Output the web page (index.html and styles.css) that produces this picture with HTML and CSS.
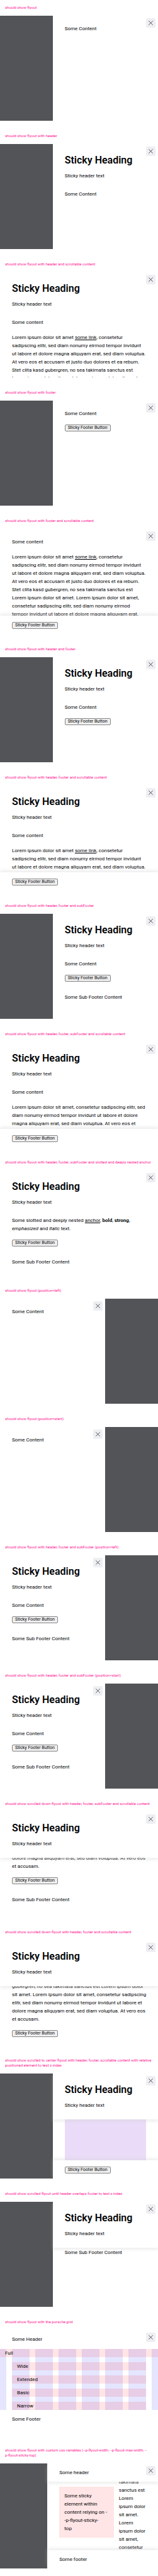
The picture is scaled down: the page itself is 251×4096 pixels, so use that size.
FILE: index.html
```html
<!DOCTYPE html>
<html lang="en">
<head>
<meta charset="utf-8">
<title>Flyout</title>
<link rel="stylesheet" href="styles.css">
</head>
<body>
<svg class="sprite" aria-hidden="true"><symbol id="close" viewBox="0 0 14 14"><path d="M.6.6 13.4 13.4M13.4.6.6 13.4" fill="none" stroke="currentColor" stroke-width="1.3"/></symbol></svg>

<section class="case">
<p class="label">should show flyout</p>
<div class="frame"><div class="backdrop"></div><div class="flyout">
<button class="close" aria-label="Close"><svg><use href="#close"/></svg></button>
<div class="scroll no-header"><div class="content"><p>Some Content</p></div></div>
</div></div>
</section>

<section class="case">
<p class="label">should show flyout with header</p>
<div class="frame"><div class="backdrop"></div><div class="flyout">
<button class="close" aria-label="Close"><svg><use href="#close"/></svg></button>
<header class="header"><h2>Sticky Heading</h2><p>Sticky header text</p></header>
<div class="scroll"><div class="content"><p>Some Content</p></div></div>
</div></div>
</section>

<section class="case">
<p class="label">should show flyout with header and scrollable content</p>
<div class="frame"><div class="flyout">
<button class="close" aria-label="Close"><svg><use href="#close"/></svg></button>
<header class="header"><h2>Sticky Heading</h2><p>Sticky header text</p></header>
<div class="scroll"><div class="content"><p>Some content</p><p class="lines">Lorem ipsum dolor sit amet <a href="#">some link</a>, consetetur<br>sadipscing elitr, sed diam nonumy eirmod tempor invidunt<br>ut labore et dolore magna aliquyam erat, sed diam voluptua.<br>At vero eos et accusam et justo duo dolores et ea rebum.<br>Stet clita kasd gubergren, no sea takimata sanctus est<br>Lorem ipsum dolor sit amet. Lorem ipsum dolor sit amet,</p></div></div>
</div></div>
</section>

<section class="case">
<p class="label">should show flyout with footer</p>
<div class="frame"><div class="backdrop"></div><div class="flyout">
<button class="close" aria-label="Close"><svg><use href="#close"/></svg></button>
<div class="scroll no-header"><div class="content"><p>Some Content</p></div>
<footer class="footer"><button class="btn">Sticky Footer Button</button></footer></div>
</div></div>
</section>

<section class="case">
<p class="label">should show flyout with footer and scrollable content</p>
<div class="frame"><div class="flyout">
<button class="close" aria-label="Close"><svg><use href="#close"/></svg></button>
<div class="scroll no-header"><div class="content"><p>Some content</p><p class="lines">Lorem ipsum dolor sit amet <a href="#">some link</a>, consetetur<br>sadipscing elitr, sed diam nonumy eirmod tempor invidunt<br>ut labore et dolore magna aliquyam erat, sed diam voluptua.<br>At vero eos et accusam et justo duo dolores et ea rebum.<br>Stet clita kasd gubergren, no sea takimata sanctus est<br>Lorem ipsum dolor sit amet. Lorem ipsum dolor sit amet,<br>consetetur sadipscing elitr, sed diam nonumy eirmod<br>tempor invidunt ut labore et dolore magna aliquyam erat,</p></div></div>
<footer class="footer stuck"><button class="btn">Sticky Footer Button</button></footer>
</div></div>
</section>

<section class="case">
<p class="label">should show flyout with header and footer</p>
<div class="frame"><div class="backdrop"></div><div class="flyout">
<button class="close" aria-label="Close"><svg><use href="#close"/></svg></button>
<header class="header"><h2>Sticky Heading</h2><p>Sticky header text</p></header>
<div class="scroll"><div class="content"><p>Some Content</p></div>
<footer class="footer"><button class="btn">Sticky Footer Button</button></footer></div>
</div></div>
</section>

<section class="case">
<p class="label">should show flyout with header, footer and scrollable content</p>
<div class="frame"><div class="flyout">
<button class="close" aria-label="Close"><svg><use href="#close"/></svg></button>
<header class="header"><h2>Sticky Heading</h2><p>Sticky header text</p></header>
<div class="scroll"><div class="content"><p>Some content</p><p class="lines">Lorem ipsum dolor sit amet <a href="#">some link</a>, consetetur<br>sadipscing elitr, sed diam nonumy eirmod tempor invidunt<br>ut labore et dolore magna aliquyam erat, sed diam voluptua.</p></div></div>
<footer class="footer stuck"><button class="btn">Sticky Footer Button</button></footer>
</div></div>
</section>

<section class="case">
<p class="label">should show flyout with header, footer and subFooter</p>
<div class="frame"><div class="backdrop"></div><div class="flyout">
<button class="close" aria-label="Close"><svg><use href="#close"/></svg></button>
<header class="header"><h2>Sticky Heading</h2><p>Sticky header text</p></header>
<div class="scroll"><div class="content"><p>Some Content</p></div>
<footer class="footer"><button class="btn">Sticky Footer Button</button></footer>
<div class="sub-footer"><p>Some Sub Footer Content</p></div></div>
</div></div>
</section>

<section class="case">
<p class="label">should show flyout with header, footer, subFooter and scrollable content</p>
<div class="frame"><div class="flyout">
<button class="close" aria-label="Close"><svg><use href="#close"/></svg></button>
<header class="header"><h2>Sticky Heading</h2><p>Sticky header text</p></header>
<div class="scroll"><div class="content"><p>Some content</p><p class="lines">Lorem ipsum dolor sit amet, consetetur sadipscing elitr, sed<br>diam nonumy eirmod tempor invidunt ut labore et dolore<br>magna aliquyam erat, sed diam voluptua. At vero eos et</p></div></div>
<footer class="footer stuck"><button class="btn">Sticky Footer Button</button></footer>
</div></div>
</section>

<section class="case">
<p class="label">should show flyout with header, footer, subFooter and slotted and deeply nested anchor</p>
<div class="frame"><div class="flyout">
<button class="close" aria-label="Close"><svg><use href="#close"/></svg></button>
<header class="header"><h2>Sticky Heading</h2><p>Sticky header text</p></header>
<div class="scroll"><div class="content"><p class="lines">Some slotted and deeply nested <a href="#">anchor</a>, <b>bold</b>, <strong>strong</strong>,<br><em>emphasized</em> and <i>italic</i> text.</p></div>
<footer class="footer"><button class="btn">Sticky Footer Button</button></footer>
<div class="sub-footer"><p>Some Sub Footer Content</p></div></div>
</div></div>
</section>

<section class="case">
<p class="label">should show flyout (position=left)</p>
<div class="frame"><div class="flyout">
<button class="close" aria-label="Close"><svg><use href="#close"/></svg></button>
<div class="scroll no-header"><div class="content"><p>Some Content</p></div></div>
</div><div class="backdrop"></div></div>
</section>

<section class="case">
<p class="label">should show flyout (position=start)</p>
<div class="frame"><div class="flyout">
<button class="close" aria-label="Close"><svg><use href="#close"/></svg></button>
<div class="scroll no-header"><div class="content"><p>Some Content</p></div></div>
</div><div class="backdrop"></div></div>
</section>

<section class="case">
<p class="label">should show flyout with header, footer and subFooter (position=left)</p>
<div class="frame"><div class="flyout">
<button class="close" aria-label="Close"><svg><use href="#close"/></svg></button>
<header class="header"><h2>Sticky Heading</h2><p>Sticky header text</p></header>
<div class="scroll"><div class="content"><p>Some Content</p></div>
<footer class="footer"><button class="btn">Sticky Footer Button</button></footer>
<div class="sub-footer"><p>Some Sub Footer Content</p></div></div>
</div><div class="backdrop"></div></div>
</section>

<section class="case">
<p class="label">should show flyout with header, footer and subFooter (position=start)</p>
<div class="frame"><div class="flyout">
<button class="close" aria-label="Close"><svg><use href="#close"/></svg></button>
<header class="header"><h2>Sticky Heading</h2><p>Sticky header text</p></header>
<div class="scroll"><div class="content"><p>Some Content</p></div>
<footer class="footer"><button class="btn">Sticky Footer Button</button></footer>
<div class="sub-footer"><p>Some Sub Footer Content</p></div></div>
</div><div class="backdrop"></div></div>
</section>

<section class="case">
<p class="label">should show scrolled down flyout with header, footer, subFooter and scrollable content</p>
<div class="frame"><div class="flyout">
<button class="close" aria-label="Close"><svg><use href="#close"/></svg></button>
<header class="header stuck"><h2>Sticky Heading</h2><p>Sticky header text</p></header>
<div class="scroll scrolled-down"><div class="content"><p class="lines">dolore magna aliquyam erat, sed diam voluptua. At vero eos<br>et accusam.</p></div>
<footer class="footer"><button class="btn">Sticky Footer Button</button></footer>
<div class="sub-footer"><p>Some Sub Footer Content</p></div></div>
</div></div>
</section>

<section class="case">
<p class="label">should show scrolled down flyout with header, footer and scrollable content</p>
<div class="frame"><div class="flyout">
<button class="close" aria-label="Close"><svg><use href="#close"/></svg></button>
<header class="header stuck"><h2>Sticky Heading</h2><p>Sticky header text</p></header>
<div class="scroll scrolled-down"><div class="content"><p class="lines">gubergren, no sea takimata sanctus est Lorem ipsum dolor<br>sit amet. Lorem ipsum dolor sit amet, consetetur sadipscing<br>elitr, sed diam nonumy eirmod tempor invidunt ut labore et<br>dolore magna aliquyam erat, sed diam voluptua. At vero eos<br>et accusam.</p></div>
<footer class="footer"><button class="btn">Sticky Footer Button</button></footer></div>
</div></div>
</section>

<section class="case">
<p class="label">should show scrolled to center flyout with header, footer, scrollable content with relative<br>positioned element to test z-index</p>
<div class="frame"><div class="backdrop"></div><div class="flyout">
<button class="close" aria-label="Close"><svg><use href="#close"/></svg></button>
<header class="header stuck"><h2>Sticky Heading</h2><p>Sticky header text</p></header>
<div class="scroll"><div class="block"></div></div>
<footer class="footer stuck"><button class="btn">Sticky Footer Button</button></footer>
</div></div>
</section>

<section class="case">
<p class="label">should show scrolled flyout until header overlaps footer to test z-index</p>
<div class="frame"><div class="backdrop"></div><div class="flyout">
<button class="close" aria-label="Close"><svg><use href="#close"/></svg></button>
<header class="header stuck"><h2>Sticky Heading</h2><p>Sticky header text</p></header>
<div class="scroll"><div class="sub-footer tight"><p>Some Sub Footer Content</p></div></div>
</div></div>
</section>

<section class="case">
<p class="label">should show flyout with the porsche grid</p>
<div class="frame"><div class="flyout">
<button class="close" aria-label="Close"><svg><use href="#close"/></svg></button>
<header class="header compact"><p>Some Header</p></header>
<div class="scroll">
<div class="grid">
<i class="col col-1"></i><i class="col col-2"></i><i class="col col-3"></i><i class="col col-4"></i><i class="col col-5"></i><i class="col col-6"></i><i class="col col-7"></i><i class="col col-8"></i>
<p class="row row-1 full">Full</p><p class="row row-2">Wide</p><p class="row row-3">Extended</p><p class="row row-4">Basic</p><p class="row row-5">Narrow</p>
</div>
<footer class="footer compact"><p>Some Footer</p></footer></div>
</div></div>
</section>

<section class="case">
<p class="label">should show flyout with custom css variables (--p-flyout-width, --p-flyout-max-width, --<br>p-flyout-sticky-top)</p>
<div class="frame"><div class="backdrop narrow"></div><div class="flyout">
<button class="close" aria-label="Close"><svg><use href="#close"/></svg></button>
<header class="header compact stuck"><p>Some header</p></header>
<div class="scroll"><div class="content split"><div class="sticky-box"><p class="lines">Some sticky<br>element within<br>content relying on -<br>-p-flyout-sticky-<br>top</p></div><p class="side">takimata sanctus est Lorem ipsum dolor sit amet. Lorem ipsum dolor sit amet, consetetur</p></div></div>
<footer class="footer compact stuck"><p>Some footer</p></footer>
</div></div>
</section>
</body>
</html>
```
FILE: styles.css
```css
* { box-sizing: border-box; }
body { margin: 0; background: #fff; color: #010205; font: 8px/13px Roboto, "Liberation Sans", sans-serif; }
p, h2 { margin: 0; }
a { color: inherit; text-decoration: underline; }
.sprite { display: none; }
.lines { white-space: nowrap; }

.case { padding-bottom: 12px; }
.label { padding: 8px 4px 9px 8px; font-size: 6px; line-height: 8px; color: #ff1493; }
.frame { display: flex; height: 167px; overflow: hidden; }
.backdrop { flex: none; width: 33.333%; background: #535457; }
.backdrop.narrow { width: 30%; }

.flyout { position: relative; flex: 1; min-width: 0; display: flex; flex-direction: column; background: #fff; }
.close { position: absolute; z-index: 3; top: 4px; right: 4px; display: flex; align-items: center; justify-content: center; width: 15px; height: 15px; padding: 0; border: 0; border-radius: 2px; background: #eeeff2; color: #010205; }
.close svg { width: 7px; height: 7px; }

.header { position: relative; z-index: 2; flex: none; padding: 15px 19px 16px; background: #fff; }
.header h2 { margin-bottom: 7px; font-size: 16px; line-height: 22px; font-weight: 600; white-space: nowrap; }
.header.compact { padding: 8px 19px; }
.header.stuck { box-shadow: 0 3px 5px rgba(204, 204, 204, .35); }

.scroll { flex: 1; min-height: 0; display: flex; flex-direction: column; overflow: hidden; }
.no-header { padding-top: 14px; }
.scrolled-down { justify-content: flex-end; padding-bottom: 5px; }
.content { flex: none; padding: 0 19px 1px; }
.content p + p { margin-top: 11px; }

.footer { position: relative; z-index: 1; flex: none; display: flex; padding: 10px 19px 8px; background: #fff; }
.footer.compact { padding: 8px 19px; }
.footer.stuck { box-shadow: 0 -3px 5px rgba(204, 204, 204, .35); }
.btn { height: 11px; padding: 0 4px; border: 1px solid #858585; border-radius: 2px; background: #efefef; color: #010205; font: 7px/9px Roboto, "Liberation Sans", sans-serif; white-space: nowrap; }
.sub-footer { flex: none; padding: 10px 19px 16px; }
.sub-footer.tight { padding-top: 1px; }

.block { flex: 1; margin: 0 19px; background: #eadcf8; }

.grid { flex: none; display: grid; grid-template-columns: 10px repeat(6, 1fr) 10px; grid-template-rows: repeat(5, 13px); gap: 8px 9px; margin-top: 1px; }
.col { grid-row: 1 / -1; background: rgba(0, 0, 255, .1); }
.col-1 { grid-column: 1; }
.col-2 { grid-column: 2; }
.col-3 { grid-column: 3; }
.col-4 { grid-column: 4; }
.col-5 { grid-column: 5; }
.col-6 { grid-column: 6; }
.col-7 { grid-column: 7; }
.col-8 { grid-column: 8; }
.row { grid-column: 2 / 8; padding-left: 8px; background: rgba(255, 0, 0, .1); }
.row.full { grid-column: 1 / -1; }
.row-1 { grid-row: 1; }
.row-2 { grid-row: 2; }
.row-3 { grid-row: 3; }
.row-4 { grid-row: 4; }
.row-5 { grid-row: 5; }

.split { display: grid; grid-template-columns: 2fr 1fr; gap: 8px; align-items: start; }
.sticky-box { margin-top: 8px; padding: 8px; background: #ffe5e5; }
.side { margin-top: -6px; }
```
